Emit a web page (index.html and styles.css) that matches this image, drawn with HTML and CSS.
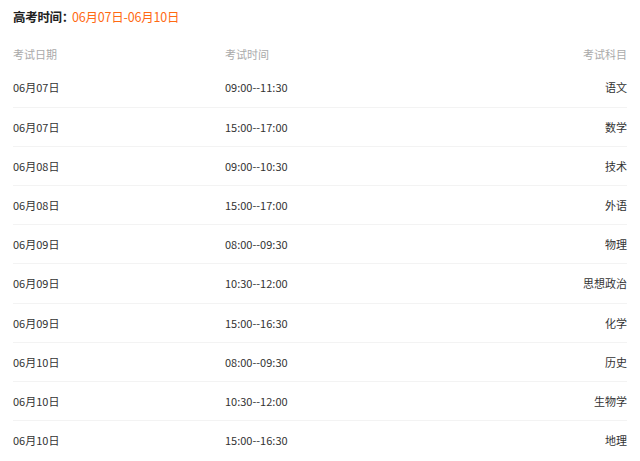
FILE: index.html
```html
<!DOCTYPE html>
<html lang="zh">
<head>
<meta charset="utf-8">
<link rel="stylesheet" href="styles.css">
</head>
<body>
<div class="page">
  <div class="title">高考时间：<span class="range">06月07日-06月10日</span></div>
  <div class="table">
    <div class="row head"><span>考试日期</span><span>考试时间</span><span class="r">考试科目</span></div>
    <div class="row"><span>06月07日</span><span>09:00--11:30</span><span class="r">语文</span></div>
    <div class="row"><span>06月07日</span><span>15:00--17:00</span><span class="r">数学</span></div>
    <div class="row"><span>06月08日</span><span>09:00--10:30</span><span class="r">技术</span></div>
    <div class="row"><span>06月08日</span><span>15:00--17:00</span><span class="r">外语</span></div>
    <div class="row"><span>06月09日</span><span>08:00--09:30</span><span class="r">物理</span></div>
    <div class="row"><span>06月09日</span><span>10:30--12:00</span><span class="r">思想政治</span></div>
    <div class="row"><span>06月09日</span><span>15:00--16:30</span><span class="r">化学</span></div>
    <div class="row"><span>06月10日</span><span>08:00--09:30</span><span class="r">历史</span></div>
    <div class="row"><span>06月10日</span><span>10:30--12:00</span><span class="r">生物学</span></div>
    <div class="row last"><span>06月10日</span><span>15:00--16:30</span><span class="r">地理</span></div>
  </div>
</div>
</body>
</html>
```
FILE: styles.css
```css
html, body { margin: 0; padding: 0; background: #fff; }
body { font-family: "Noto Sans CJK SC", "Noto Sans", sans-serif; color: #333; }
.page { padding: 0 13px; }
.title { height: 34px; line-height: 34px; margin-bottom: 6px; font-size: 12.5px; font-weight: bold; color: #222; letter-spacing: -0.3px; }
.range { color: #ff6a13; font-weight: normal; margin-left: -2px; letter-spacing: -0.2px; }
.table { display: flex; flex-direction: column; }
.row { display: grid; grid-template-columns: 212px 1fr auto; align-items: center; height: 38.2px; border-bottom: 1px solid #f3f3f3; font-size: 11px; }
.row.head { height: 28.4px; color: #aaa; border-bottom: none; }
.row.last { border-bottom: none; }
.r { text-align: right; }
```
